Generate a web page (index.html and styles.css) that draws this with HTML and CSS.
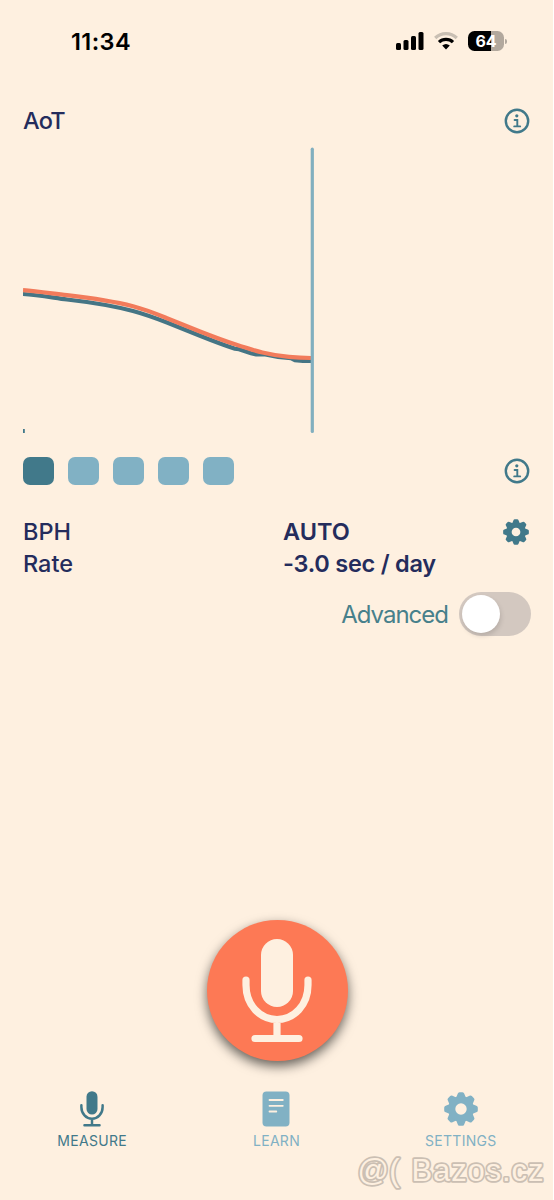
FILE: index.html
```html
<!DOCTYPE html>
<html lang="en">
<head>
<meta charset="utf-8">
<title>Measure</title>
<link rel="stylesheet" href="styles.css">
</head>
<body>
<svg class="defs" width="0" height="0" aria-hidden="true">
  <symbol id="info" viewBox="0 0 26 26">
    <circle cx="13" cy="13" r="11.2" fill="none" stroke="currentColor" stroke-width="2.4"/>
    <circle cx="12.800" cy="7.800" r="1.600" fill="currentColor"/>
    <path d="M10.600 12H13.300V18.200M10.200 18.400H16.200" fill="none" stroke="currentColor" stroke-width="1.900" stroke-linecap="round"/>
  </symbol>
  <symbol id="gear" viewBox="-17 -17 34 34">
    <g fill="currentColor">
      <path id="tooth" d="M-5-11L-3.300-15.300Q-2.900-16.800-1.500-16.800H1.500Q2.900-16.800 3.300-15.300L5-11V-7H-5ZM-5 11L-3.300 15.300Q-2.900 16.800-1.500 16.800H1.500Q2.900 16.800 3.300 15.300L5 11V7H-5Z"/>
      <use href="#tooth" transform="rotate(45)"/>
      <use href="#tooth" transform="rotate(90)"/>
      <use href="#tooth" transform="rotate(135)"/>
    </g>
    <circle r="9.300" fill="none" stroke="currentColor" stroke-width="7.200"/>
  </symbol>
  <symbol id="mic" viewBox="0 0 70 104">
    <rect x="19" y="0" width="32" height="68" rx="16" fill="currentColor"/>
    <path d="M4 41V46C4 66 18 80.500 35 80.500S66 66 66 46V41M35 81V99M13 99.500H57" fill="none" stroke="currentColor" stroke-width="7.200" stroke-linecap="round"/>
  </symbol>
</svg>
<div class="screen">
  <header class="status">
    <span class="clock">11:34</span>
    <div class="indicators">
      <svg class="signal" viewBox="0 0 28 18"><rect x="0" y="11" width="5" height="7" rx="1.500"/><rect x="7.500" y="8" width="5" height="10" rx="1.500"/><rect x="15" y="4" width="5" height="14" rx="1.500"/><rect x="22.500" y="0" width="5" height="18" rx="1.500"/></svg>
      <svg class="wifi" viewBox="0 0 24 18"><g fill="none" stroke-width="3.200"><path class="weak" d="M1.200 6A15.500 15.500 0 0 1 22.800 6"/><path d="M5 10.200A10 10 0 0 1 19 10.200"/></g><path class="dot" d="M8.200 13.600Q12 10.400 15.800 13.600L12 17.600Z"/></svg>
      <div class="battery"><span>64</span></div>
      <i class="nub"></i>
    </div>
  </header>

  <main>
    <div class="row title"><span class="label">AoT</span><svg class="icon"><use href="#info"/></svg></div>
    <svg class="chart" viewBox="23 146 508 290">
      <path class="signal-line" d="M23 294C38 294.700 52 297.500 67 299.500C91 302.200 113 305.800 133 311C146 314.500 156 318.300 167 322.500L200 335.800C211 340.200 222 344.500 235 348.800L239 349.200L251 353.200L256 354.300H264L278 356.800L291 358.100L295 360.200L303 361H311"/>
      <path class="trend-line" d="M23 290.200C38 291.500 52 293.500 67 295.200C91 298 113 301.200 133 306.300C146 309.700 156 313.800 167 318.200L200 331.500C211 335.800 222 340 235 344.300C256 351.200 269 355.200 289 356.800Q300 357.600 311 358"/>
      <path class="cursor" d="M312.300 149.200V431.500"/>
      <rect class="tick" x="23" y="429" width="1.800" height="4"/>
    </svg>
    <div class="row bars">
      <div class="squares"><i class="on"></i><i></i><i></i><i></i><i></i></div>
      <svg class="icon"><use href="#info"/></svg>
    </div>
    <div class="readings">
      <span class="label">BPH</span><strong class="auto">AUTO</strong><svg class="icon"><use href="#gear"/></svg>
      <span class="label">Rate</span><strong class="rate">-3.0 sec / day</strong>
    </div>
    <div class="advanced"><span>Advanced</span><div class="toggle"></div></div>
    <button class="record" aria-label="Record"><svg><use href="#mic"/></svg></button>
  </main>

  <nav>
    <a class="active"><svg class="nav-mic"><use href="#mic"/></svg><span>MEASURE</span></a>
    <a><svg class="nav-doc" viewBox="0 0 28 36"><rect x=".5" y=".5" width="27" height="35" rx="4"/><path d="M7.500 9H20.800M7.500 14.800H20.800M7.500 20.500H14.300"/></svg><span>LEARN</span></a>
    <a><svg class="nav-gear"><use href="#gear"/></svg><span>SETTINGS</span></a>
  </nav>
  <svg class="watermark" viewBox="0 0 200 44"><text x="6.500" y="28.500" textLength="42">@(</text><text x="60.500" y="28.500" textLength="132">Bazos.cz</text></svg>
</div>
</body>
</html>
```
FILE: styles.css
```css
* { box-sizing: border-box; }
body { margin: 0; background: #fff; font-family: Inter, "Liberation Sans", sans-serif; }
.defs { position: absolute; }
.screen {
  position: relative;
  width: 553px;
  height: 1200px;
  background: #fef0e0;
  color: #242c5c;
  display: flex;
  flex-direction: column;
  overflow: hidden;
}
svg { display: block; }

.status { height: 84px; padding: 0 46px 2px 71px; display: flex; align-items: center; justify-content: space-between; color: #000; }
.clock { font-size: 23.5px; font-weight: 600; letter-spacing: .4px; }
.indicators { display: flex; align-items: center; }
.signal { width: 28px; height: 18px; }
.wifi { width: 24px; height: 18px; margin-left: 10px; stroke: #000; }
.wifi .weak { stroke: #c9bfb3; }
.wifi .dot { stroke: none; }
.battery {
  width: 36px; height: 20px; margin-left: 10px; border-radius: 6.500px;
  background: linear-gradient(90deg, #000 64%, #b2a89d 64%);
  color: #fff; font-size: 16px; font-weight: 700; line-height: 20px; text-align: center;
}
.nub { width: 2px; height: 5px; margin-left: 1px; border-radius: 0 2px 2px 0; background: #b2a89d; }

main { padding: 0 22px 0 23px; display: flex; flex-direction: column; }
.row { display: flex; align-items: center; justify-content: space-between; }
.icon { width: 26px; height: 26px; margin-right: 1.500px; color: #41798a; }
.label, strong { font-size: 23.5px; line-height: 32px; }
.label { font-weight: 500; }
strong { font-weight: 600; }
.title { height: 62px; padding-top: 11px; }
.title .label { letter-spacing: -.8px; padding-top: 1px; }
.chart { width: 508px; height: 290px; }
.chart path { fill: none; stroke-width: 4.200; }
.signal-line { stroke: #457585; }
.trend-line { stroke: #f27b5b; }
.chart .cursor { stroke: #82afbf; stroke-width: 3.200; stroke-linecap: round; }
.tick { fill: #41798a; }
.bars { height: 70px; }
.squares { display: flex; gap: 14px; }
.squares i { width: 31px; height: 28px; border-radius: 7px; background: #81b1c4; }
.squares .on { background: #41798a; }
.readings { padding-top: 10px; display: grid; grid-template-columns: 260px 1fr 28px; grid-auto-rows: 32px; align-items: center; }
.readings .icon { margin: 0; }
.rate { letter-spacing: -.25px; }
.advanced { height: 44px; margin-top: 12px; display: flex; align-items: center; justify-content: flex-end; gap: 12px; color: #47808b; font-size: 24px; letter-spacing: -1px; }
.advanced span { margin-right: -1px; }
.toggle { width: 72px; height: 44px; padding: 3px; border-radius: 22px; background: #d3c8c0; }
.toggle::before { content: ""; display: block; width: 38px; height: 38px; border-radius: 50%; background: #fff; box-shadow: 1px 3px 5px #0002; }
.record {
  width: 141px; height: 141px; margin: 284px auto 0; padding: 0; border: 0; border-radius: 50%;
  display: grid; place-items: center;
  background: #fd7955; color: #fef0e0; box-shadow: 0 5px 12px #0009;
}
.record svg { width: 70px; height: 104px; }

nav { margin-top: 29px; display: grid; grid-template-columns: repeat(3, 1fr); }
nav a { display: flex; flex-direction: column; align-items: center; gap: 3px; color: #81b1c4; }
nav a svg { margin: 1px 0; }
nav span { font-size: 14px; line-height: 20px; letter-spacing: .3px; }
nav .active { color: #41798a; }
.nav-mic { width: 24px; height: 36px; }
.nav-doc { width: 28px; height: 36px; fill: currentColor; }
.nav-doc path { stroke: #fef0e0; stroke-width: 1.800; stroke-linecap: round; }
.nav-gear { width: 34px; height: 36px; }
.watermark { position: absolute; left: 351px; top: 1152px; width: 200px; height: 44px; }
.watermark text { font: 31px "Liberation Sans", sans-serif; fill: #fef0e0; stroke: #cbbfb3; stroke-width: 3.500px; paint-order: stroke; stroke-linejoin: round; }
```
